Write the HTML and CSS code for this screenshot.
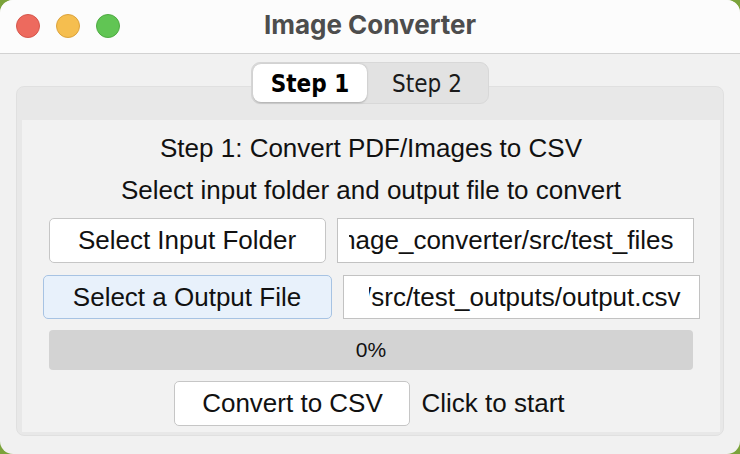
FILE: index.html
```html
<!DOCTYPE html>
<html>
<head>
<meta charset="utf-8">
<title>Image Converter</title>
<link rel="stylesheet" href="styles.css">
</head>
<body>
<div class="window">
  <header class="titlebar">
    <div class="lights">
      <span class="light red"></span>
      <span class="light yellow"></span>
      <span class="light green"></span>
    </div>
    <div class="title">Image Converter</div>
    <div></div>
  </header>
  <main class="content">
    <div class="tabs">
      <div class="segmented">
        <span class="seg active">Step 1</span>
        <span class="seg">Step 2</span>
      </div>
    </div>
    <section class="panel">
      <div class="pane">
        <div class="line">Step 1: Convert PDF/Images to CSV</div>
        <div class="line">Select input folder and output file to convert</div>
        <div class="row row-1">
          <button class="btn btn-input">Select Input Folder</button>
          <div class="field field-1"><span>mage_converter/src/test_files</span></div>
        </div>
        <div class="row row-2">
          <button class="btn btn-output">Select a Output File</button>
          <div class="field field-2"><span>/src/test_outputs/output.csv</span></div>
        </div>
        <div class="progress"><span>0%</span></div>
        <div class="row row-convert">
          <button class="btn btn-convert">Convert to CSV</button>
          <span class="status">Click to start</span>
        </div>
      </div>
    </section>
  </main>
</div>
</body>
</html>
```
FILE: styles.css
```css
html, body {
  margin: 0;
  padding: 0;
}
body {
  background: #7ba33b;
  width: 740px;
  height: 454px;
  overflow: hidden;
  font-family: "Liberation Sans", Arial, sans-serif;
  color: #111;
}
.window {
  width: 740px;
  height: 454px;
  background: #f1f1f1;
  border-radius: 13px;
  overflow: hidden;
  display: flex;
  flex-direction: column;
}
.titlebar {
  height: 53px;
  flex: none;
  background: #fcfcfc;
  border-bottom: 1px solid #d2d2d2;
  display: grid;
  grid-template-columns: 1fr auto 1fr;
  align-items: center;
}
.lights {
  display: flex;
  gap: 16px;
  padding-left: 16px;
  padding-bottom: 2px;
}
.light {
  width: 24px;
  height: 24px;
  border-radius: 50%;
  box-sizing: border-box;
}
.red { background: #ed6a5e; border: 1px solid #d6574c; }
.yellow { background: #f5be4f; border: 1px solid #dca33c; }
.green { background: #61c554; border: 1px solid #4fab43; }
.title {
  font-family: Inter, "Liberation Sans", sans-serif;
  font-weight: 700;
  font-size: 26px;
  color: #4d4d4d;
  padding-bottom: 4px;
}
.content {
  flex: 1;
  display: flex;
  flex-direction: column;
}
.tabs {
  display: flex;
  justify-content: center;
  margin-top: 8px;
  margin-bottom: -18px;
  position: relative;
  z-index: 1;
}
.segmented {
  display: flex;
  background: #e2e2e2;
  border: 1px solid #d8d8d8;
  border-radius: 9px;
  padding: 1px;
  width: 238px;
  height: 42px;
  box-sizing: border-box;
}
.seg {
  flex: none;
  display: flex;
  align-items: center;
  justify-content: center;
  font-family: "DejaVu Sans Condensed", "DejaVu Sans", sans-serif;
  font-size: 24px;
  color: #1a1a1a;
  border-radius: 8px;
  padding-top: 2px;
}
.seg:first-child { width: 114px; }
.seg:last-child { flex: 1; }
.seg.active {
  background: #ffffff;
  font-weight: 700;
  color: #000;
  box-shadow: 0 0.5px 2px rgba(0,0,0,0.25);
}
.panel {
  margin: 0 16px;
  height: 350px;
  box-sizing: border-box;
  background: #e8e8e8;
  border: 1px solid #e0e0e0;
  border-radius: 8px;
  padding: 33px 3px 3px 5px;
  display: flex;
}
.pane {
  flex: 1;
  background: #f2f2f2;
  display: flex;
  flex-direction: column;
  align-items: center;
  padding-top: 7px;
}
.line {
  height: 42px;
  line-height: 42px;
  font-size: 26px;
  color: #111;
}
.row {
  display: flex;
  gap: 11px;
  justify-content: center;
  align-items: center;
}
.row-1 { margin-top: 7px; height: 45px; }
.row-2 { margin-top: 12px; height: 44px; }
.row-convert { margin-top: 11px; height: 45px; }
.btn {
  font-family: "Liberation Sans", Arial, sans-serif;
  font-size: 26px;
  color: #111;
  background: #ffffff;
  border: 1.5px solid #c6c6c6;
  border-radius: 5px;
  padding: 0;
  margin: 0;
  height: 100%;
  box-sizing: border-box;
}
.btn-input { width: 277px; }
.btn-output {
  width: 289px;
  background: #e8f1fb;
  border-color: #a7c3e3;
}
.btn-convert { width: 236px; margin-left: -3px; }
.field {
  width: 357px;
  height: 100%;
  box-sizing: border-box;
  background: #ffffff;
  border: 1.5px solid #c2c2c2;
  display: flex;
  justify-content: flex-end;
  align-items: center;
  overflow: hidden;
  font-size: 26px;
  white-space: nowrap;
}
.field-1 { padding: 0 19px 0 11px; }
.field-2 { padding: 0 18px 0 25px; }
.field span {
  display: flex;
  justify-content: flex-end;
  overflow: hidden;
  flex: 1;
}
.progress {
  margin-top: 11px;
  width: 644px;
  height: 40px;
  background: #d3d3d3;
  border-radius: 4px;
  display: flex;
  align-items: center;
  justify-content: center;
  font-size: 21px;
  color: #111;
}
.status {
  font-size: 26px;
  color: #111;
}
```
